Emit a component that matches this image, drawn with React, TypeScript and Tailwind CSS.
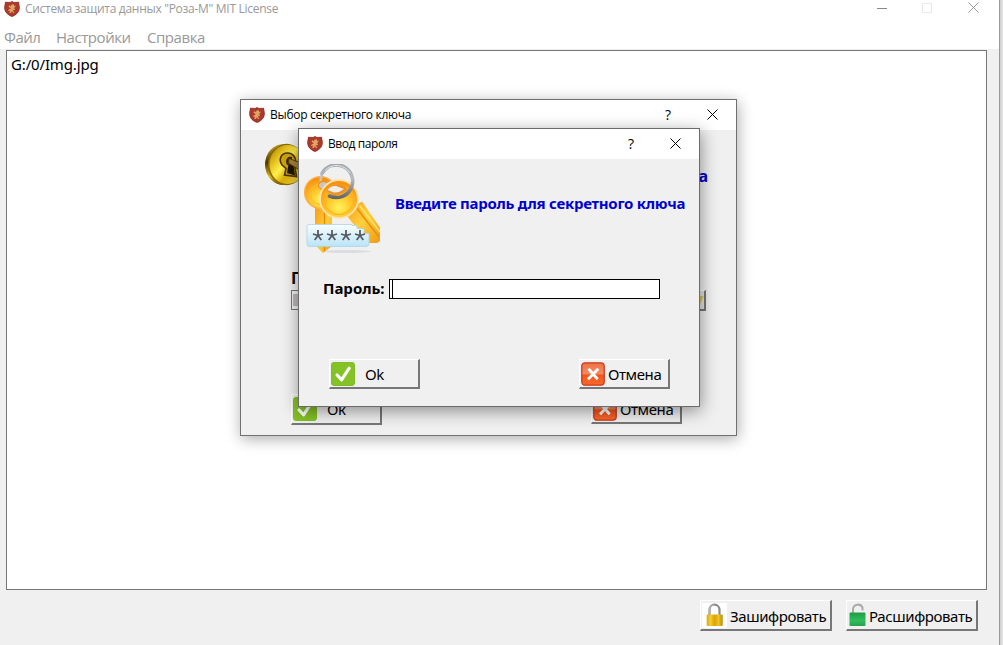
import type { ReactNode } from 'react';
import clsx from 'clsx';

function Shield({ className }: { className?: string }) {
  return (
    <svg className={clsx('shrink-0', className)} width="16" height="16" viewBox="0 0 16 16">
      <path d="M8 .3 9.800 1.200 15 .9c-.5 2 .9 3.700.6 6.300C15.200 11.500 12 14.200 8 15.800 4 14.200.8 11.500.4 7.200.1 4.600 1.500 2.900 1 .9l5.200.3z" fill="#ab3a2c" />
      <path d="M8 .5 9.800 1.400 14.700 1.200c-.3 2 .9 3.500.6 6C15 11.300 11.800 13.900 8 15.500 4.200 13.900 1 11.300.7 7.200c-.3-2.500.9-4 .6-6l4.900.2z" fill="none" stroke="#8a3226" strokeWidth=".6" />
      <path d="M5.200 4 6.600 5.300 8 3.300l1.900.3.4 1.700 1.300-1.100-.3 1.900-1.600 1.100 1.500.8-.8 1.300-1.400-.6.4 1.600 1.200 1.100-1.600.6-.9-1.900-1 1.600-1.800.6.4-1.600.4-1.300-2.400.7 1-1.700L7 7.300 4.600 6.100z" fill="#e0a562" />
    </svg>
  );
}

function CloseGlyph() {
  return (
    <svg width="11" height="11" viewBox="0 0 11 11" className="mb-[2px] shrink-0">
      <path d="M.5.5l10 10M10.500.5l-10 10" stroke="currentColor" strokeWidth="1" fill="none" />
    </svg>
  );
}

function CheckIcon() {
  return (
    <svg width="24" height="24" viewBox="0 0 25 25" className="shrink-0">
      <rect x=".5" y=".5" width="24" height="24" rx="2.500" fill="#84c225" stroke="#7dba20" />
      <path d="M6.300 13.500l4.700 5L19 6.500" fill="none" stroke="#fff" strokeWidth="3.300" strokeLinecap="round" strokeLinejoin="round" />
    </svg>
  );
}

function CancelIcon() {
  return (
    <svg width="24" height="24" viewBox="0 0 25 25" className="shrink-0">
      <defs>
        <linearGradient id="cancel" x1="0" y1="0" x2="0" y2="1">
          <stop offset="0" stopColor="#ef7147" />
          <stop offset=".48" stopColor="#f58a60" />
          <stop offset=".55" stopColor="#f2541c" />
          <stop offset="1" stopColor="#ff6a2e" />
        </linearGradient>
      </defs>
      <rect x=".8" y=".8" width="23.400" height="23.400" rx="3.500" fill="url(#cancel)" stroke="#c73a1a" strokeWidth="1.300" />
      <path d="M7.800 7l9.600 11M18 7L7.300 18" fill="none" stroke="#fff" strokeWidth="2.900" />
    </svg>
  );
}

function PadlockClosed() {
  return (
    <svg width="25" height="25" viewBox="0 0 25 25" className="shrink-0">
      <defs>
        <linearGradient id="gold" x1="0" x2="1">
          <stop offset="0" stopColor="#d9a800" />
          <stop offset=".22" stopColor="#f3cf38" />
          <stop offset=".5" stopColor="#dba400" />
          <stop offset=".75" stopColor="#edc42a" />
          <stop offset="1" stopColor="#b98700" />
        </linearGradient>
      </defs>
      <rect width="25" height="25" fill="#fff" />
      <path d="M7.500 12V7a5 5.300 0 0110 0V12" fill="none" stroke="#8b8b8b" strokeWidth="2.200" />
      <path d="M7.200 11V7a5 5.300 0 015-5" fill="none" stroke="#d0d0d0" strokeWidth=".8" />
      <rect x="4.700" y="11.500" width="16" height="11.500" rx="1" fill="url(#gold)" />
    </svg>
  );
}

function PadlockOpen() {
  return (
    <svg width="20" height="25" viewBox="0 0 20 25" className="shrink-0">
      <defs>
        <linearGradient id="green" x1="0" y1="0" x2="0" y2="1">
          <stop offset="0" stopColor="#1f9c43" />
          <stop offset=".6" stopColor="#2fbe5a" />
          <stop offset="1" stopColor="#2aa04a" />
        </linearGradient>
      </defs>
      <path d="M5 11.500V6.500a5 5 0 019.500-2V7.500" fill="none" stroke="#a8aca8" strokeWidth="2" />
      <rect x="1.500" y="9.500" width="16" height="13.500" rx="1" fill="url(#green)" />
    </svg>
  );
}

function KeyholeIcon() {
  return (
    <svg width="44" height="44" viewBox="0 0 44 44" className="shrink-0">
      <defs>
        <linearGradient id="brass" x1="0" y1=".1" x2="1" y2="1">
          <stop offset="0" stopColor="#a98106" />
          <stop offset=".22" stopColor="#e2bc1c" />
          <stop offset=".42" stopColor="#fff04e" />
          <stop offset=".6" stopColor="#d9ab05" />
          <stop offset="1" stopColor="#fff06a" />
        </linearGradient>
        <linearGradient id="rim" x1="0" y1="0" x2="0" y2="1">
          <stop offset="0" stopColor="#c9a832" />
          <stop offset=".45" stopColor="#4b3500" />
          <stop offset=".8" stopColor="#d9b51a" />
          <stop offset="1" stopColor="#6b4e00" />
        </linearGradient>
      </defs>
      <ellipse cx="18.500" cy="22.500" rx="18.500" ry="20.500" fill="url(#rim)" />
      <ellipse cx="21.500" cy="22.500" rx="18.500" ry="20.700" fill="#8c6a00" />
      <ellipse cx="22.500" cy="22.500" rx="18" ry="19.600" fill="url(#brass)" />
      <path d="M21 26.500l-4-3.500c-3.500-5-1.500-12 5.500-12 6 0 10 6 7 12l2 11.500L19.500 33z" fill="#cda30c" stroke="#4a3500" strokeWidth="1.600" />
      <path d="M23.500 22l-1.500 9 8 2.500-1.500-11z" fill="#1e1500" />
      <path d="M21 20c0-4 2.500-6 6-5v8h-5z" fill="#3b2900" />
      <path d="M24 16.500l12 4.500v8L23.500 21z" fill="#a68235" stroke="#5b4108" />
    </svg>
  );
}

function KeysIcon() {
  const stars = [14, 28, 42, 56];
  return (
    <svg width="78" height="90" viewBox="0 0 78 90" className="shrink-0">
      <defs>
        <radialGradient id="head" cx=".5" cy=".72" r=".65">
          <stop offset="0" stopColor="#fff45c" />
          <stop offset=".45" stopColor="#ffca2c" />
          <stop offset="1" stopColor="#f8920f" />
        </radialGradient>
        <linearGradient id="blade" x1="0" y1="0" x2="1" y2="1">
          <stop offset="0" stopColor="#f79a14" />
          <stop offset=".5" stopColor="#ffcf3c" />
          <stop offset="1" stopColor="#f09a14" />
        </linearGradient>
        <linearGradient id="field" x1="0" y1="0" x2="0" y2="1">
          <stop offset="0" stopColor="#fafdff" />
          <stop offset="1" stopColor="#b9e4f6" />
        </linearGradient>
        <linearGradient id="ring" x1="0" y1="0" x2="0" y2="1">
          <stop offset="0" stopColor="#a3a7ad" />
          <stop offset=".4" stopColor="#b9bcc0" />
          <stop offset="1" stopColor="#66686c" />
        </linearGradient>
      </defs>
      <ellipse cx="42" cy="87.500" rx="25" ry="1.500" fill="#dadde1" />
      <path d="M11 42h17v40l-9 7-8-8z" fill="url(#blade)" />
      <path d="M20.500 43v44" stroke="#e88c0c" strokeWidth="1.500" />
      <path d="M40 48 58 37.500 76 63.500V77l-3 2H64z" fill="url(#blade)" />
      <path d="M53 44.500 75 73" stroke="#e8930f" strokeWidth="1.800" />
      <path d="M55.500 41.500 76 68" stroke="#ffe36a" strokeWidth="1.500" />
      <circle cx="16.500" cy="28.500" r="15.800" fill="url(#head)" stroke="#fbaf4a" strokeWidth="1.500" />
      <circle cx="17" cy="30" r="10.500" fill="none" stroke="#ffb92a" strokeWidth="1" />
      <ellipse cx="19.500" cy="21.500" rx="5" ry="4" fill="#c9c6c2" stroke="#ee8613" />
      <path d="M16.500 17A15.500 15.500 0 0124 4" fill="none" stroke="#c1c4c9" strokeWidth="2.500" />
      <circle cx="35" cy="35" r="19" fill="url(#head)" stroke="#ffe2b0" strokeWidth="1.800" />
      <circle cx="35" cy="36" r="14.500" fill="none" stroke="#ffb31f" strokeWidth="1.200" />
      <path d="M22.500 27q4-7 13-6.500 7 .5 7.500 5-6 7-13 6z" fill="#e9932a" />
      <path d="M23.500 26q3-4.500 8.500-4l8 3q-5 4-10 3.500z" fill="#f1ede6" />
      <path d="M18 9.500A16.300 16.300 0 1125.500 32" fill="none" stroke="url(#ring)" strokeWidth="3.600" strokeLinecap="round" />
      <path d="M21 6.500A15.800 15.800 0 0146 9" fill="none" stroke="#e4e6e8" strokeWidth="1" />
      <path d="M5 60.500h43v1h5v3h7v5h5v10q0 3-3 3H5q-2 0-2-3V62.500q0-2 2-2z" fill="url(#field)" stroke="#a9d4ea" strokeWidth=".8" />
      {stars.map((x) => (
        <path key={x} d={`M${x} 71.500v-5.500M${x} 71.500l5-1.500M${x} 71.500l3.300 4.500M${x} 71.500l-3.300 4.500M${x} 71.500l-5-1.500`} stroke="#555b61" strokeWidth="1.800" fill="none" />
      ))}
    </svg>
  );
}

function ToolButton({ icon, children, className }: { icon: ReactNode; children: ReactNode; className?: string }) {
  return (
    <button
      className={clsx(
        'flex shrink-0 items-center border-t border-l border-t-white border-l-white border-r-2 border-b-2 border-r-[#777] border-b-[#777] bg-[#f0f0f0] pl-px text-left text-[15px] leading-5 tracking-[-0.4px] whitespace-nowrap text-black',
        className,
      )}
    >
      {icon}
      {children}
    </button>
  );
}

function DialogBar({ title, className }: { title: string; className?: string }) {
  return (
    <div className="flex h-[30px] items-center bg-white pr-[18px] pl-2 font-['Open_Sans',sans-serif] text-xs text-black">
      <Shield />
      <span className={clsx('ml-[5px] flex-1 whitespace-nowrap', className)}>{title}</span>
      <span className="mr-[36px] mb-px text-[14px] leading-none">?</span>
      <CloseGlyph />
    </div>
  );
}

function KeyDialog() {
  return (
    <section className="absolute top-[99px] left-[240px] flex h-[337px] w-[497px] flex-col border border-[#707070] bg-[#f0f0f0] shadow-[1px_3px_14px_rgba(0,0,0,0.33)]">
      <DialogBar title="Выбор секретного ключа" className="tracking-[-0.29px]" />
      <div className="flex h-[138px] items-start justify-between pt-3 pr-7 pl-6">
        <KeyholeIcon />
        <span className="mt-6 text-[16px] leading-5 font-bold text-[#0000d0]">а</span>
      </div>
      <div className="ml-[50px] h-[22px] text-[16px] leading-5 font-bold text-black">П</div>
      <div className="ml-[50px] flex h-[21px] w-[415px] items-start justify-between">
        <div className="h-5 w-[380px] border border-[#777] bg-[#f0f0f0] px-px py-[3px]">
          <div className="h-full w-full bg-[#bdb9b9]" />
        </div>
        <button className="flex h-[21px] w-[22px] items-center justify-end border-t border-l border-white border-r-2 border-b-2 border-r-[#777] border-b-[#777] bg-[#e4e4e2]">
          <svg width="17" height="16" viewBox="0 0 17 16"><path d="M1 2h6l2 2h7.500l-4 10H1z" fill="#d9c45c" /></svg>
        </button>
      </div>
      <div className="mt-[83px] flex items-start justify-between pr-[54px] pl-[50px]">
        <ToolButton icon={<CheckIcon />} className="h-[31px] w-[91px] gap-[10px]">Ок</ToolButton>
        <ToolButton icon={<CancelIcon />} className="h-[30px] w-[91px] gap-[3px]">Отмена</ToolButton>
      </div>
    </section>
  );
}

function PasswordDialog() {
  return (
    <section className="absolute top-[128px] left-[298px] flex h-[279px] w-[402px] flex-col border border-[#6b6b6b] bg-[#f0f0f0] shadow-[1px_4px_16px_rgba(0,0,0,0.42)]">
      <DialogBar title="Ввод пароля" className="tracking-[-0.42px]" />
      <div className="flex h-[120px] items-start pt-[5px] pl-[5px]">
        <KeysIcon />
        <h1 className="mt-[29px] ml-[13px] text-[15px] leading-5 font-bold tracking-[-0.27px] whitespace-nowrap text-[#0000d0]">
          Введите пароль для секретного ключа
        </h1>
      </div>
      <label className="flex h-5 items-start pl-6 text-[15px] font-bold text-black">
        <span className="w-[66px] leading-[18px]">Пароль:</span>
        <span className="flex h-5 w-[271px] items-center border border-black bg-white pl-[2px]">
          <span className="h-full w-px bg-black" />
        </span>
      </label>
      <div className="mt-[60px] flex justify-between pr-[29px] pl-[30px]">
        <ToolButton icon={<CheckIcon />} className="h-[30px] w-[91px] gap-[10px]">Ok</ToolButton>
        <ToolButton icon={<CancelIcon />} className="h-[30px] w-[91px] gap-[3px]">Отмена</ToolButton>
      </div>
    </section>
  );
}

export default function App() {
  return (
    <div className="relative flex h-[645px] w-[1003px] overflow-hidden bg-gradient-to-r from-[#d0d0d0] from-[99.7%] to-[#e6e6e6] font-['Noto_Sans',sans-serif]">
      <main className="flex w-[1000px] flex-col border-r border-[#999] bg-[#f0f0f0]">
        <header className="h-[49px] shrink-0 bg-white font-['Open_Sans',sans-serif] text-[#999]">
          <div className="flex h-[17px] items-center pr-[20px] pl-1">
            <Shield />
            <span className="ml-[5px] flex-1 text-xs tracking-[-0.29px] whitespace-nowrap">Система защита данных "Роза-М" MIT License</span>
            <span className="mr-[35px] h-px w-[10px] bg-[#888]" />
            <span className="mr-[36px] mb-px size-[10px] border border-[#e9e9e9]" />
            <CloseGlyph />
          </div>
          <nav className="flex pt-[10px] pl-1 text-[15px] leading-5">
            <span className="w-[52px] tracking-[-0.5px]">Файл</span>
            <span className="w-[91px] tracking-[-0.45px]">Настройки</span>
            <span className="tracking-[-0.45px]">Справка</span>
          </nav>
        </header>
        <div className="mt-px ml-[6px] h-[540px] w-[981px] shrink-0 border border-[#777] bg-white px-1 pt-[3px] text-[15px] leading-5 tracking-[-0.15px] text-black">
          G:/0/Img.jpg
        </div>
        <footer className="flex gap-[14px] pt-[10px] pl-[700px]">
          <ToolButton icon={<PadlockClosed />} className="h-[31px] w-[132px] gap-[3px] pt-px">Зашифровать</ToolButton>
          <ToolButton icon={<PadlockOpen />} className="h-[31px] w-[132px] gap-px pt-px">Расшифровать</ToolButton>
        </footer>
      </main>
      <KeyDialog />
      <PasswordDialog />
    </div>
  );
}
